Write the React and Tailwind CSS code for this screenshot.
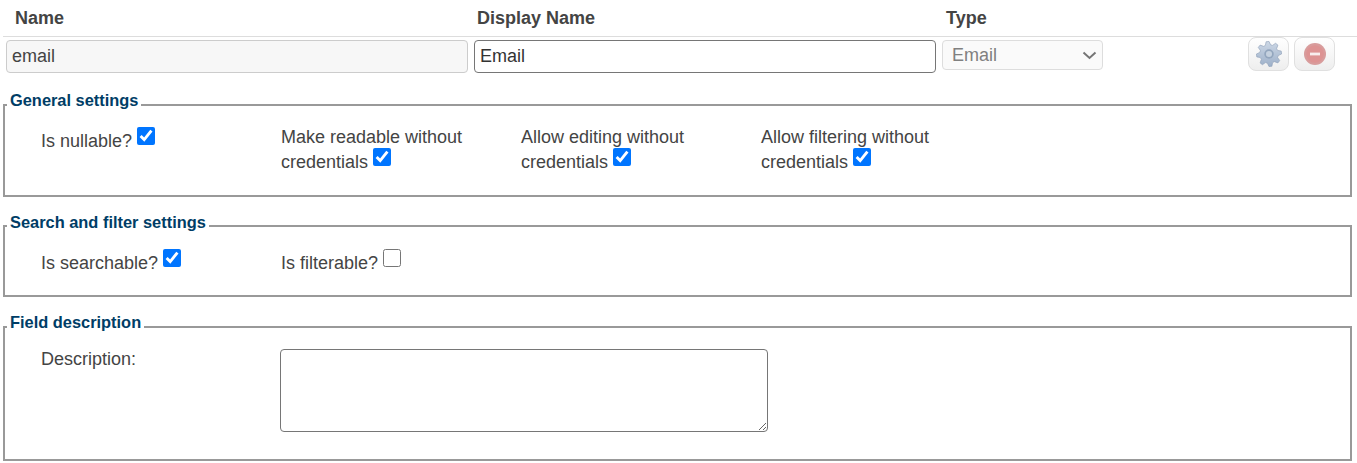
import React from "react";

// 8-toothed gear outline, centred on 12,12
function gearPath() {
  const pts = [];
  for (let i = 0; i < 8; i++) {
    const a = (i * Math.PI) / 4 - Math.PI / 8;
    const step = Math.PI / 4;
    [
      [8.6, a + step * 0.0],
      [11.6, a + step * 0.2],
      [11.6, a + step * 0.5],
      [8.6, a + step * 0.72],
    ].forEach(([r, t]) => {
      pts.push(`${(12 + r * Math.cos(t)).toFixed(2)} ${(12 + r * Math.sin(t)).toFixed(2)}`);
    });
  }
  return "M" + pts.join("L") + "Z";
}

function GearIcon() {
  return (
    <svg width="26" height="26" viewBox="0 0 24 24" className="blur-[0.4px]">
      <defs>
        <linearGradient id="gearFill" x1="0" y1="0" x2="0" y2="1">
          <stop offset="0" stopColor="#cdd8e6" />
          <stop offset="1" stopColor="#9db0c9" />
        </linearGradient>
      </defs>
      <path d={gearPath()} fill="url(#gearFill)" stroke="#8fa1b9" strokeWidth="0.6" />
      <circle cx="12" cy="12" r="4.4" fill="#93a6be" />
      <circle cx="12" cy="12" r="2.8" fill="#c5d1df" />
    </svg>
  );
}

function RemoveIcon() {
  return (
    <svg width="24" height="24" viewBox="0 0 24 24" className="blur-[0.4px]">
      <circle cx="12" cy="12" r="11" fill="#d89c9c" />
      <circle cx="12" cy="12" r="8.8" fill="#dd9393" />
      <rect x="7" y="10.6" width="10" height="2.8" fill="#f8eeee" />
    </svg>
  );
}

function Check({ checked = true }) {
  return (
    <input
      type="checkbox"
      defaultChecked={checked}
      className="inline-block w-[18px] h-[18px] mb-[1px] align-[2px]"
    />
  );
}

function Section({ title, legendClass, className, children }) {
  return (
    <fieldset className={`ml-[3px] w-[1349px] border-2 border-[#999] ${className}`}>
      <legend className={`ml-[2px] px-[3px] text-[16.4px] leading-[18px] font-bold text-[#003d66] ${legendClass}`}>
        {title}
      </legend>
      <div className="flex pl-[36px]">{children}</div>
    </fieldset>
  );
}

function Cell({ children }) {
  return <div className="w-[240px] pr-[40px]">{children}</div>;
}

export default function App() {
  return (
    <div className="w-[1357px] h-[463px] overflow-hidden bg-white text-[18px] leading-[21px] text-[#444]" style={{ fontFamily: '"Liberation Sans", Arial, sans-serif' }}>
      {/* Header */}
      <div className="ml-[3px] h-[37px] flex items-center border-b border-[#ddd] font-bold">
        <div className="w-[474px] pl-[12px]">Name</div>
        <div className="w-[469px]">Display Name</div>
        <div>Type</div>
      </div>

      {/* Field row */}
      <div className="flex h-[36px]">
        <input
          readOnly
          value="email"
          className="ml-[6px] mt-[3px] w-[462px] h-[33px] px-[5px] bg-[#f7f7f7] border border-[#ccc] rounded-[4px]"
        />
        <input
          defaultValue="Email"
          className="ml-[6px] mt-[3px] w-[462px] h-[33px] px-[5px] border border-[#767676] rounded-[4px] text-[#333]"
        />
        <div className="relative ml-[6px] mt-[3px] w-[161px] h-[30px]">
          <select
            disabled
            className="appearance-none w-full h-full px-[9px] bg-[#fafafa] border border-[#ddd] rounded-[4px] text-[#808080]"
          >
            <option>Email</option>
          </select>
          <svg width="15" height="9" viewBox="0 0 15 9" className="absolute right-[6px] top-[11px]">
            <path d="M1.5 1.5 L7.5 7 L13.5 1.5" fill="none" stroke="#757575" strokeWidth="2" />
          </svg>
        </div>
        <button className="ml-[145px] w-[41px] h-[34px] flex items-center justify-center rounded-[8px] border border-[#e0e0e0] bg-gradient-to-b from-white to-[#eee]">
          <GearIcon />
        </button>
        <button className="ml-[5px] w-[41px] h-[34px] flex items-center justify-center rounded-[8px] border border-[#e0e0e0] bg-gradient-to-b from-white to-[#eee]">
          <RemoveIcon />
        </button>
      </div>

      <Section title="General settings" legendClass="pb-[10px]" className="mt-[18px] pt-[8px] pb-[22px]">
        <Cell>Is nullable? <Check /></Cell>
        <Cell>Make readable without credentials <Check /></Cell>
        <Cell>Allow editing without credentials <Check /></Cell>
        <Cell>Allow filtering without credentials <Check /></Cell>
      </Section>

      <Section title="Search and filter settings" legendClass="pb-[8px]" className="mt-[16px] pt-[10px] pb-[21px]">
        <Cell>Is searchable? <Check /></Cell>
        <Cell>Is filterable? <Check checked={false} /></Cell>
      </Section>

      <Section title="Field description" legendClass="pb-[10px]" className="mt-[16px] pt-[7px] pb-[27px]">
        <div className="w-[239px] pt-[1px]">Description:</div>
        <textarea className="block w-[488px] h-[83px] mt-[1px] border border-[#767676] rounded-[4px]" />
      </Section>
    </div>
  );
}
